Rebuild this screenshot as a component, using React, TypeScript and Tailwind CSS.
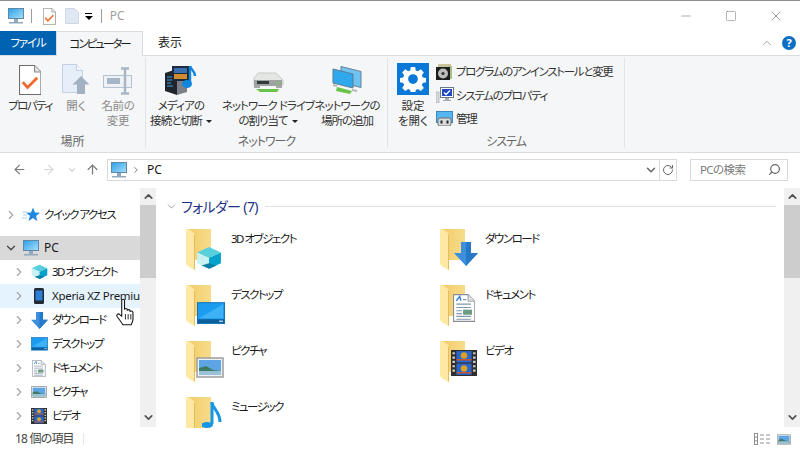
import type { ReactNode } from 'react'
import { ArrowLeft, ArrowRight, ArrowUp, ChevronDown, ChevronRight, ChevronUp, Minus, RotateCw, Search, Square, X } from 'lucide-react'

// Small drawn icons, everything is roughly the Windows 10 shell set
const Pc = ({ s = 18 }: { s?: number }) => (
  <svg width={s} height={s} viewBox="0 0 18 18">
    <defs>
      <linearGradient id="scr" x1="0" y1="0" x2="1" y2="1">
        <stop offset="0" stopColor="#2b9fe8" />
        <stop offset="1" stopColor="#a8e0fb" />
      </linearGradient>
    </defs>
    <rect x="1.5" y="1.5" width="15" height="10" fill="url(#scr)" stroke="#5f88a8" />
    <rect x="7" y="12" width="4" height="3" fill="#8fa9bd" />
    <rect x="2" y="15" width="14" height="1.5" fill="#8fa9bd" />
  </svg>
)

const PropDoc = ({ s = 30 }: { s?: number }) => (
  <svg width={s * 0.75} height={s} viewBox="0 0 21 28">
    <path d="M.5.5h14l6 6v21H.5z" fill="#fff" stroke="#6d6d6d" />
    <path d="M14.5.5v6h6" fill="#e4e4e4" stroke="#8a8a8a" />
    <path d="M3.5 16l4.5 5 9-9" fill="none" stroke="#ee6a2c" strokeWidth="2.6" />
  </svg>
)

const OpenIcon = () => (
  <svg width="28" height="31" viewBox="0 0 28 31">
    <path d="M.5.5h14l6 6v22H.5z" fill="#e6eef9" stroke="#c3d0e2" />
    <path d="M14.5.5v6h6" fill="#f4f7fb" stroke="#c3d0e2" />
    <path d="M19 12l8.5 8.5H23V30h-8v-9.500H10.500z" fill="#a3b2c3" />
  </svg>
)

const RenameIcon = () => (
  <svg width="30" height="28" viewBox="0 0 30 28">
    <rect x=".5" y="8.500" width="28" height="12" fill="#eef2f7" stroke="#b5c2d0" />
    <rect x="4" y="11" width="13" height="6" fill="#a7b6c7" />
    <path d="M18 1.500h8M18 26.500h8M22 1.500v25" fill="none" stroke="#a9b6c4" strokeWidth="2.500" />
  </svg>
)

const Media = () => (
  <svg width="34" height="30" viewBox="0 0 34 30">
    <path d="M1 8l12-4v26L1 26z" fill="#20242b" />
    <path d="M13 4l10 3v20l-10 3z" fill="#7d8187" />
    <path d="M3 12h5M3 15h7M3 18h4M3 21h6" stroke="#3f9fe0" />
    <rect x="8" y="1" width="17" height="15" fill="#1f2b3c" />
    <rect x="10" y="3" width="13" height="5" fill="#3a6fb0" />
    <rect x="10" y="9" width="13" height="5" fill="#d08a30" />
    <path d="M26 1v17" stroke="#0f86df" strokeWidth="2.400" />
    <path d="M26 1c1 4 5 5 5 10" fill="none" stroke="#0f86df" strokeWidth="2.400" />
    <ellipse cx="23" cy="19" rx="5" ry="4" fill="#0f86df" />
  </svg>
)

const Drive = () => (
  <svg width="32" height="24" viewBox="0 0 32 24">
    <path d="M6 2h18l7 7v5H2V7z" fill="#e4e6e4" stroke="#c8cac8" />
    <rect x="2" y="9" width="28" height="6" fill="#9ea2a0" />
    <rect x="5" y="10" width="12" height="3" fill="#33383a" />
    <rect x="25" y="11" width="2" height="2" fill="#6fd14a" />
    <path d="M4 18h23l-2 3H8z" fill="#69c24a" />
    <path d="M2 16h6M24 16h6" stroke="#a5a8a6" strokeWidth="2" />
  </svg>
)

const NetPlace = () => (
  <svg width="30" height="29" viewBox="0 0 30 29">
    <path d="M9 .5l20 5v16l-20-5z" fill="#6ec3f3" stroke="#6a8194" />
    <path d="M1 3l20 5v14L1 17z" fill="#2fa8ee" stroke="#5e7a90" />
    <path d="M5 21l15 4-2 3-14-3z" fill="#69c24a" />
    <path d="M1 19l4 1M20 24l5 1" stroke="#b5b9b6" strokeWidth="2" />
  </svg>
)

const Gear = () => (
  <svg width="26" height="26" viewBox="0 0 24 24">
    <path
      fillRule="evenodd"
      fill="#fff"
      d="M10 1h4l.6 3.100 1.900.8 2.700-1.800 2.800 2.800-1.800 2.700.8 1.900 3 .6v4l-3 .6-.8 1.900 1.800 2.700-2.800 2.800-2.700-1.800-1.900.8-.6 3h-4l-.6-3-1.900-.8-2.700 1.800-2.800-2.800 1.800-2.700-.8-1.900-3-.6v-4l3-.6.8-1.900-1.800-2.700 2.800-2.800 2.700 1.800 1.900-.8zM12 7.500a4.500 4.500 0 1 0 0 9 4.500 4.500 0 0 0 0-9z"
    />
  </svg>
)

const Disc = () => (
  <svg width="16" height="16" viewBox="0 0 16 16">
    <rect x="2" y="0" width="13" height="4" fill="#c8c39a" />
    <rect x="12" y="2" width="4" height="13" fill="#a9c08a" />
    <rect x="0" y="3" width="14" height="13" fill="#1d1d1d" />
    <circle cx="7" cy="9.500" r="5" fill="#bcbcbc" />
    <circle cx="7" cy="9.500" r="1.600" fill="#333" />
  </svg>
)

const SysProp = () => (
  <svg width="18" height="16" viewBox="0 0 18 16">
    <rect x="0" y="5" width="3" height="11" fill="#d9dcdf" stroke="#9aa0a5" strokeWidth=".6" />
    <rect x="4.500" y=".5" width="13" height="10" fill="#fff" stroke="#6d7b88" />
    <rect x="6" y="2" width="10" height="7" fill="#1f47c4" />
    <path d="M8 5.500l2 2 4-4" stroke="#fff" strokeWidth="1.300" fill="none" />
    <path d="M9 11h4v2h2v1H7v-1h2z" fill="#a4adb5" />
  </svg>
)

const Manage = () => (
  <svg width="17" height="15" viewBox="0 0 17 15">
    <rect x=".5" y=".5" width="16" height="11" fill="#55b5f0" stroke="#3f87bd" />
    <rect x="2" y="7" width="13" height="8" rx="2" fill="#d8dadc" stroke="#6d6f71" />
    <rect x="4.500" y="9.500" width="2" height="3" fill="#222" />
    <rect x="10.500" y="9.500" width="2" height="3" fill="#222" />
  </svg>
)

const Star = () => (
  <svg width="18" height="16" viewBox="0 0 18 16">
    <path d="M11 .5l2 5 5 .3-4 3.200 1.400 5.300L11 11l-4.500 3 1.400-5.200L4 5.800l5-.3z" fill="#1e87e0" />
    <path d="M0 5h5M1 8h4M0 11h5" stroke="#a9d3f2" />
  </svg>
)

const Cube = ({ s = 17 }: { s?: number }) => (
  <svg width={s} height={s} viewBox="0 0 24 24">
    <path d="M12 1l11 5-11 5L1 6z" fill="#58cfdd" />
    <path d="M1 6l11 5v10L1 16z" fill="#c8f1f3" />
    <path d="M23 6l-11 5v10l11-5z" fill="#05a3cb" />
    <path d="M12 21l-7-3 7-2 7 2z" fill="#0a7ea4" />
  </svg>
)

const Phone = () => (
  <svg width="12" height="16" viewBox="0 0 12 16">
    <rect x="1" y="0" width="10" height="16" rx="1.500" fill="#222a33" />
    <rect x="2.500" y="2.500" width="7" height="10" fill="#2c7fd6" />
  </svg>
)

const Down = ({ s = 17 }: { s?: number }) => (
  <svg width={s} height={s} viewBox="0 0 24 24">
    <path d="M7 0h10v11h7L12 24 0 11h7z" fill="#3b8fdc" />
    <path d="M12 24L24 11h-7V0h-5z" fill="#2878c8" />
  </svg>
)

const Desk = ({ s = 17 }: { s?: number }) => (
  <svg width={s} height={s * 0.8} viewBox="0 0 28 22">
    <rect x=".5" y=".5" width="27" height="21" fill="#1b9cf0" stroke="#1673b5" />
    <path d="M2 16L26 2v14z" fill="#3fb2f6" />
    <rect x="1" y="17" width="26" height="4" fill="#0c5f9c" />
    <path d="M22 19h4" stroke="#fff" />
  </svg>
)

const Doc = ({ s = 17 }: { s?: number }) => (
  <svg width={s * 0.8} height={s} viewBox="0 0 20 25">
    <path d="M.5.5h13l6 6v18H.5z" fill="#fff" stroke="#8a8f94" />
    <path d="M13.500.5v6h6" fill="#dfe2e5" stroke="#a4a8ac" />
    <path d="M3 6l3-4 1 4" fill="none" stroke="#2f7fd6" strokeWidth="1.200" />
    <path d="M9 5h3M3 9h13M3 12h13M3 20h13M3 22.500h13" stroke="#7f98ad" />
    <rect x="9" y="14" width="8" height="4.500" fill="#6c9b84" />
    <path d="M3 15h5M3 17.500h5" stroke="#7f98ad" />
  </svg>
)

const Pic = ({ w = 16, h = 12 }: { w?: number; h?: number }) => (
  <svg width={w} height={h} viewBox="0 0 28 21">
    <rect x="1" y="1" width="26" height="19" fill="#eef2f5" stroke="#9d9d9d" strokeWidth="1.500" />
    <rect x="3" y="3" width="22" height="15" fill="#5da5e4" />
    <path d="M3 11l7-2 7 4 8 1v4H3z" fill="#3e7b62" />
    <rect x="3" y="14" width="22" height="4" fill="#9ac1d6" />
  </svg>
)

const Film = ({ s = 16 }: { s?: number }) => (
  <svg width={s} height={s} viewBox="0 0 24 24">
    <rect x="0" y="0" width="24" height="24" fill="#2e2e2e" />
    <rect x="5" y="1" width="14" height="10.500" fill="#2c66c6" />
    <rect x="5" y="12.500" width="14" height="10.500" fill="#2c66c6" />
    <circle cx="12" cy="5" r="3" fill="#d9a12c" />
    <circle cx="12" cy="17" r="3" fill="#d9a12c" />
    <path d="M5 9h14M5 21h14" stroke="#b7573f" strokeWidth="1.500" />
    <path d="M2.500 2v20M21.500 2v20" stroke="#c8c8c8" strokeWidth="2.400" strokeDasharray="2 2" />
  </svg>
)

const Note = () => (
  <svg width="20" height="26" viewBox="0 0 20 26">
    <path d="M10 0v22" stroke="#1596e6" strokeWidth="3" />
    <path d="M10 1c1 6 8 9 8 19" fill="none" stroke="#1596e6" strokeWidth="3" />
    <ellipse cx="5" cy="23" rx="6" ry="3" fill="#1596e6" />
  </svg>
)

const Folder = () => (
  <svg width="26" height="42" viewBox="0 0 26 42" className="shrink-0">
    <defs>
      <linearGradient id="fld" x1="0" y1="0" x2="1" y2="0">
        <stop offset="0" stopColor="#f0cb66" />
        <stop offset="1" stopColor="#f8dc8c" />
      </linearGradient>
    </defs>
    <rect x="0" y="0" width="25" height="31" fill="url(#fld)" />
    <path d="M0 0h3l6 5v36l-6-3-3-3z" fill="#ffe8a4" />
    <path d="M9 5v36l-1-1V6z" fill="#e6bd5c" />
  </svg>
)

const HandCursor = () => (
  <svg width="22" height="30" viewBox="0 0 20 28" className="absolute left-[115px] top-[298px]">
    <path
      d="M6 2.500c0-1.800 2.600-1.800 2.600 0V11c0-1.500 2.600-1.500 2.600 0v1c0-1.500 2.600-1.500 2.600 0v1c0-1.400 2.700-1.200 2.700.5v6c0 2.500-1 3.500-1.700 5.500H7c-1-2-2.500-4-5.200-7.500-1.300-1.800.8-3.500 2.400-2l1.800 1.500z"
      fill="#fff"
      stroke="#111"
      strokeWidth="1"
    />
    <path d="M9.500 15v5M12 15v5M14.500 15v5" stroke="#111" strokeWidth=".8" />
  </svg>
)

function RibbonBtn({ icon, lines, w, className, caret }: { icon: ReactNode; lines: string[]; w: string; className?: string; caret?: boolean }) {
  return (
    <div className={`flex flex-col items-center ${w} ${className ?? ''}`}>
      <div className="flex h-[40px] items-end justify-center pb-[3px]">{icon}</div>
      {lines.map((l, i) => (
        <div key={l} className="whitespace-nowrap text-[11.5px] leading-[15px]">
          {l}
          {caret && i === lines.length - 1 && (
            <span className="ml-[4px] inline-block border-x-[3px] border-t-[3px] border-x-transparent border-t-[#222] align-middle" />
          )}
        </div>
      ))}
    </div>
  )
}

function Group({ label, w, children, track }: { label: string; w: string; children: ReactNode; track?: string }) {
  return (
    <div className={`flex h-[96px] flex-col ${w}`}>
      <div className="flex h-[75px] pt-[2px]">{children}</div>
      <div className={`flex h-[19px] flex-1 items-center justify-center text-[12px] text-[#666] ${track ?? ''}`}>{label}</div>
    </div>
  )
}

const Sep = () => <div className="mt-[2px] h-[90px] w-px shrink-0 bg-[#e2e3e4]" />

function Scrollbar() {
  return (
    <div className="mt-[2px] mb-px flex w-[16px] shrink-0 flex-col bg-[#f0f0f0]">
      <div className="flex h-[17px] items-center justify-center">
        <ChevronUp size={13} strokeWidth={3} color="#505050" />
      </div>
      <div className="h-[73px] bg-[#cdcdcd]" />
      <div className="flex flex-1 items-end justify-center pb-[3px]">
        <ChevronDown size={13} strokeWidth={3} color="#505050" />
      </div>
    </div>
  )
}

function NavRow({ icon, label, child, className }: { icon: ReactNode; label: string; child?: boolean; className?: string }) {
  return (
    <div className={`flex h-[24px] items-center ${child ? 'pl-[14px]' : 'pl-[6px]'} ${className ?? ''}`}>
      <div className="flex w-[9px] shrink-0 justify-center">
        <ChevronRight size={14} strokeWidth={2} color="#a6a6a6" className="shrink-0" />
      </div>
      <div className="ml-[7px] flex h-[18px] w-[18px] shrink-0 items-center justify-center">{icon}</div>
      <span className="ml-[4px] whitespace-nowrap text-[11.5px]">{label}</span>
    </div>
  )
}

function FolderItem({ overlay, name, ox, oy }: { overlay: ReactNode; name: string; ox: string; oy: string }) {
  return (
    <div className="flex h-[56px]">
      <div className="relative h-[56px] w-[45px] shrink-0">
        <Folder />
        <div className={`absolute ${ox} ${oy}`}>{overlay}</div>
      </div>
      <span className="mt-[1px] text-[11.5px] leading-[17px] tracking-[-1.5px]">{name}</span>
    </div>
  )
}

export default function App() {
  return (
    <div className="relative flex h-[450px] w-[800px] flex-col overflow-hidden bg-white text-[#1a1a1a] [font-family:'Noto_Sans','Noto_Sans_CJK_JP',sans-serif] [font-feature-settings:'palt']">
      <div className="h-px bg-[#8a8f94]" />

      {/* title bar */}
      <div className="flex h-[30px] items-center pl-[7px]">
        <Pc />
        <div className="ml-[6px] h-[14px] w-px bg-[#9a9a9a]" />
        <div className="ml-[11px]"><PropDoc s={17} /></div>
        <svg width="14" height="16" viewBox="0 0 14 16" className="ml-[9px]">
          <path d="M.5.5h9l4 4v11H.5z" fill="#dfe7f3" stroke="#ccd6e4" />
        </svg>
        <div className="ml-[6px] flex flex-col items-center gap-[2px]">
          <div className="h-px w-[7px] bg-black" />
          <div className="border-x-[4px] border-t-[4px] border-x-transparent border-t-black" />
        </div>
        <div className="ml-[8px] h-[14px] w-px bg-[#9a9a9a]" />
        <span className="ml-[8px] text-[12px] text-[#a0a0a0]">PC</span>
        <div className="ml-auto flex items-center text-[#6b6b6b]">
          <Minus size={14} strokeWidth={1} />
          <Square size={12} strokeWidth={1} className="ml-[32px]" />
          <X size={16} strokeWidth={1} className="ml-[31px] mr-[16px]" />
        </div>
      </div>

      {/* tabs */}
      <div className="flex h-[24px] items-start">
        <div className="flex h-[24px] w-[56px] items-center justify-center bg-[#0063b1] text-[11.5px] tracking-[-1.2px] text-white">ファイル</div>
        <div className="relative z-10 flex h-[25px] w-[87px] items-center justify-center border-x border-t border-[#dadbdc] bg-[#f5f6f7] text-[11.5px] tracking-[-2px]">コンピューター</div>
        <div className="flex h-[24px] w-[54px] items-center justify-center text-[12px]">表示</div>
        <div className="ml-auto flex h-[24px] items-center">
          <ChevronUp size={14} strokeWidth={1.500} color="#999" />
          <div className="ml-[8px] mr-[4px] flex h-[14px] w-[14px] items-center justify-center rounded-full bg-[#0d6fc4] text-[11px] font-bold text-white">?</div>
        </div>
      </div>

      {/* ribbon */}
      <div className="flex h-[98px] border-y border-[#dadbdc] bg-[#f5f6f7] text-[#333]">
        <Group label="場所" w="w-[145px]">
          <RibbonBtn icon={<PropDoc />} lines={['プロパティ']} w="w-[50px]" className="ml-[5px] tracking-[-1.500px]" />
          <RibbonBtn icon={<OpenIcon />} lines={['開く']} w="w-[42px]" className="text-[#8b8b8b]" />
          <RibbonBtn icon={<RenameIcon />} lines={['名前の', '変更']} w="w-[42px]" className="tracking-[-0.300px] text-[#8b8b8b]" />
        </Group>
        <Sep />
        <Group label="ネットワーク" w="w-[241px]" track="tracking-[-1px]">
          <RibbonBtn icon={<Media />} lines={['メディアの', '接続と切断']} caret w="w-[62px]" className="ml-[4px] tracking-[-0.800px]" />
          <RibbonBtn icon={<Drive />} lines={['ネットワーク ドライブ', 'の割り当て']} caret w="w-[96px]" className="ml-[8px] tracking-[-1px]" />
          <RibbonBtn icon={<NetPlace />} lines={['ネットワークの', '場所の追加']} w="w-[62px]" className="tracking-[-1px]" />
        </Group>
        <Sep />
        <Group label="システム" w="w-[236px]" track="tracking-[-1px]">
          <div className="ml-[9px] flex w-[32px] flex-col items-center">
            <div className="mt-[5px] flex h-[32px] w-[32px] items-center justify-center bg-[#0a78d7]"><Gear /></div>
            <div className="mt-[3px] whitespace-nowrap text-center text-[11.5px] leading-[15px]">設定<br />を開く</div>
          </div>
          <div className="ml-[7px] flex flex-col pt-[2px]">
            {[
              { icon: <Disc />, label: 'プログラムのアンインストールと変更' },
              { icon: <SysProp />, label: 'システムのプロパティ' },
              { icon: <Manage />, label: '管理' },
            ].map(r => (
              <div key={r.label} className="flex h-[23.500px] items-center text-[11.5px] tracking-[-1.300px]">
                <div className="flex w-[20px] justify-start">{r.icon}</div>
                <span className="whitespace-nowrap">{r.label}</span>
              </div>
            ))}
          </div>
        </Group>
        <Sep />
      </div>

      {/* address row */}
      <div className="flex h-[33px] items-center">
        <ArrowLeft size={15} strokeWidth={1.800} color="#7a7a7a" className="ml-[12px]" />
        <ArrowRight size={15} strokeWidth={1.800} color="#d6d6d6" className="ml-[14px]" />
        <ChevronDown size={10} strokeWidth={2} color="#a5a5a5" className="ml-[11px]" />
        <ArrowUp size={15} strokeWidth={2} color="#7a7a7a" className="ml-[8px]" />
        <div className="ml-[7px] flex h-[22px] w-[570px] items-center border border-[#d9d9d9]">
          <div className="ml-[2px]"><Pc /></div>
          <ChevronRight size={10} strokeWidth={2} color="#666" className="ml-[3px]" />
          <span className="ml-[6px] text-[12px]">PC</span>
          <ChevronDown size={14} strokeWidth={2.500} color="#666" className="ml-auto mr-[1px]" />
          <div className="flex h-full w-[17px] items-center justify-center border-l border-[#d9d9d9]">
            <RotateCw size={12} strokeWidth={2} color="#666" />
          </div>
        </div>
        <div className="ml-[13px] flex h-[22px] w-[98px] items-center justify-between border border-[#d9d9d9] pl-[9px] pr-[6px]">
          <span className="text-[11.5px] tracking-[-0.600px] text-[#7a7a7a]">PCの検索</span>
          <Search size={13} strokeWidth={2.200} color="#666" className="-scale-x-100" />
        </div>
      </div>

      {/* main */}
      <div className="flex h-[242px]">
        <div className="w-[140px] shrink-0 overflow-hidden pt-[17px] tracking-[-1.500px]">
          <NavRow icon={<Star />} label="クイック アクセス" />
          <div className="mt-[9px] flex h-[24px] items-center bg-[#d9d9d9] pl-[6px]">
            <div className="flex w-[9px] shrink-0 justify-center">
              <ChevronDown size={14} strokeWidth={2.200} color="#444" className="shrink-0" />
            </div>
            <div className="ml-[7px] flex h-[18px] w-[18px] items-center justify-center"><Pc /></div>
            <span className="ml-[4px] text-[12px] tracking-normal">PC</span>
          </div>
          <NavRow child icon={<Cube />} label="3D オブジェクト" />
          <NavRow child icon={<Phone />} label="Xperia XZ Premium" className="bg-[#e5f3ff] tracking-[-0.300px]" />
          <NavRow child icon={<Down />} label="ダウンロード" />
          <NavRow child icon={<Desk />} label="デスクトップ" />
          <NavRow child icon={<Doc />} label="ドキュメント" />
          <NavRow child icon={<Pic />} label="ピクチャ" />
          <NavRow child icon={<Film />} label="ビデオ" />
        </div>
        <Scrollbar />

        <div className="min-w-0 flex-1 overflow-hidden">
          <div className="flex h-[41px] items-center pl-[9px] pr-[8px]">
            <ChevronDown size={13} strokeWidth={1} color="#555" />
            <span className="ml-[3px] whitespace-nowrap text-[14px] tracking-[-0.600px] text-[#1e3287]">フォルダー (7)</span>
            <div className="ml-[7px] h-px flex-1 bg-[#e2e2e2]" />
          </div>
          <div className="grid grid-cols-[254px_254px] pl-[30px] pt-[2px]">
            <FolderItem overlay={<Cube s={26} />} name="3D オブジェクト" ox="left-[10px]" oy="top-[17px]" />
            <FolderItem overlay={<Down s={24} />} name="ダウンロード" ox="left-[14px]" oy="top-[13px]" />
            <FolderItem overlay={<Desk s={28} />} name="デスクトップ" ox="left-[11px]" oy="top-[17px]" />
            <FolderItem overlay={<Doc s={28} />} name="ドキュメント" ox="left-[13px]" oy="top-[9px]" />
            <FolderItem overlay={<Pic w={28} h={21} />} name="ピクチャ" ox="left-[10px]" oy="top-[16px]" />
            <FolderItem overlay={<Film s={26} />} name="ビデオ" ox="left-[11px]" oy="top-[9px]" />
            <FolderItem overlay={<Note />} name="ミュージック" ox="left-[16px]" oy="top-[5px]" />
          </div>
        </div>
        <Scrollbar />
      </div>

      {/* status bar */}
      <div className="flex h-[22px] items-center pl-[15px] text-[12px] tracking-[-0.800px] text-[#444]">
        <span>18 個の項目</span>
        <div className="ml-[9px] h-[12px] w-px bg-[#e6e6e6]" />
        <svg width="16" height="12" viewBox="0 0 16 12" className="ml-auto">
          <rect x=".5" y=".5" width="3" height="11" fill="#fff" stroke="#8f8f8f" />
          <path d="M.5 4.200h3M.5 7.800h3M6 2h4M12 2h4M6 6h4M12 6h4M6 10h4M12 10h4" stroke="#8f8f8f" />
        </svg>
        <div className="ml-[7px] mr-[9px]"><Pic w={14} h={11} /></div>
      </div>

      <HandCursor />
    </div>
  )
}
